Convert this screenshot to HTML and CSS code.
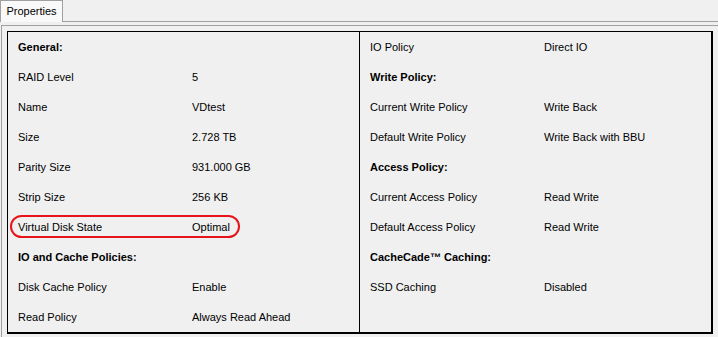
FILE: index.html
```html
<!DOCTYPE html>
<html lang="en">

<head>
    <meta charset="UTF-8">
    <title>Virtual Disk Properties</title>
    <link rel="stylesheet" href="styles.css">
</head>

<body>
    <div class="tab-strip">
        <div class="tab">Properties</div>
    </div>

    <div class="frame">
        <div class="props">
            <div class="col">
                <div class="row heading">General:</div>
                <div class="row"><span class="label">RAID Level</span><span>5</span></div>
                <div class="row"><span class="label">Name</span><span>VDtest</span></div>
                <div class="row"><span class="label">Size</span><span>2.728 TB</span></div>
                <div class="row"><span class="label">Parity Size</span><span>931.000 GB</span></div>
                <div class="row"><span class="label">Strip Size</span><span>256 KB</span></div>
                <div class="row marked">
                    <span class="label">Virtual Disk State</span><span>Optimal</span>
                    <div class="ring"></div>
                </div>
                <div class="row heading">IO and Cache Policies:</div>
                <div class="row"><span class="label">Disk Cache Policy</span><span>Enable</span></div>
                <div class="row"><span class="label">Read Policy</span><span>Always Read Ahead</span></div>
            </div>

            <div class="col">
                <div class="row"><span class="label">IO Policy</span><span>Direct IO</span></div>
                <div class="row heading">Write Policy:</div>
                <div class="row"><span class="label">Current Write Policy</span><span>Write Back</span></div>
                <div class="row"><span class="label">Default Write Policy</span><span>Write Back with BBU</span></div>
                <div class="row heading">Access Policy:</div>
                <div class="row"><span class="label">Current Access Policy</span><span>Read Write</span></div>
                <div class="row"><span class="label">Default Access Policy</span><span>Read Write</span></div>
                <div class="row heading">CacheCade&trade; Caching:</div>
                <div class="row"><span class="label">SSD Caching</span><span>Disabled</span></div>
                <div class="row"></div>
            </div>
        </div>
    </div>
</body>

</html>
```

FILE: styles.css
```css
body {
    margin: 0;
    background-color: #f0f0f0;
    font-family: "Liberation Sans", Arial, sans-serif;
    font-size: 11px;
    color: #000;
    overflow: hidden;
}

/* tab header */
.tab-strip {
    height: 21px;
    border-bottom: 1px solid #a0a0a0;
    display: flex;
}

.tab {
    width: 61px;
    height: 21px;
    margin-bottom: -1px;
    border: 1px solid #a0a0a0;
    border-bottom: none;
    background-color: #f9f9f9;
    text-align: center;
    line-height: 21px;
}

/* inner frame around the table */
.frame {
    margin: 3px 0 0 1px;
    padding: 5px 0 0 5px;
    border-top: 1px solid #a0a0a0;
    border-left: 1px solid #a0a0a0;
    height: 320px;
}

.props {
    width: 703px;
    display: grid;
    grid-template-columns: 352px 351px;
    border: 1px solid #000;
    border-right-width: 2px;
    border-bottom-width: 2px;
}

.col:first-child {
    border-right: 1px solid #000;
}

.row {
    height: 30px;
    padding-left: 10px;
    display: flex;
    align-items: center;
    position: relative;
}

.label {
    width: 174px;
}

.heading {
    font-weight: bold;
}

/* red annotation ring */
.ring {
    position: absolute;
    left: 2px;
    top: 3px;
    width: 226px;
    height: 19px;
    border: 2px solid #e8141c;
    border-radius: 12px;
}
```
